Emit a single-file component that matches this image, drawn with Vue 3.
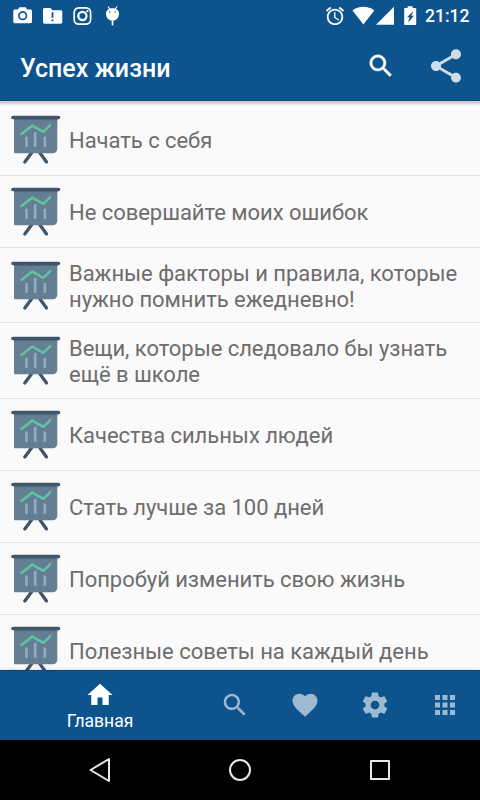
<template>
  <div class="screen">
    <header class="top">
      <div class="status-bar">
        <div class="status-left">
          <!-- camera -->
          <svg width="20" height="18" viewBox="0 0 20 18">
            <path fill="#fff" fill-rule="evenodd" d="M6.5 0.2h6l1.700 2.200h3.200c.9 0 1.600.7 1.600 1.600v10.600c0 .9-.7 1.600-1.600 1.600H1.900c-.9 0-1.600-.7-1.600-1.600V4c0-.9.7-1.600 1.600-1.600h2.900zM9.700 4.100a4.600 4.600 0 1 0 0 9.200 4.600 4.600 0 0 0 0-9.200z" />
            <circle cx="9.700" cy="8.700" r="2.900" fill="#fff" />
          </svg>
          <!-- folder -->
          <svg width="20" height="18" viewBox="0 0 20 18">
            <path fill="#fff" d="M1.700 1.100h5.800l2 2.200h8.200c1 0 1.600.7 1.600 1.600v10.200c0 1-.7 1.600-1.600 1.600h-16C.7 16.700 0 16.100 0 15.100V2.700c0-1 .7-1.600 1.700-1.600z" />
            <path fill="#0d548e" d="M8.600 5.200h1.800v5.600H8.600zM8.600 12.400h1.800v1.800H8.600z" />
          </svg>
          <!-- instagram -->
          <svg width="20" height="18" viewBox="0 0 20 18" fill="none" stroke="#fff">
            <rect x="1.200" y="0.800" width="16.400" height="16.400" rx="4.600" stroke-width="1.700" />
            <circle cx="9.400" cy="9" r="4.100" stroke-width="2.200" />
            <circle cx="14.400" cy="4.200" r="1.100" fill="#fff" stroke="none" />
          </svg>
          <!-- android -->
          <svg width="20" height="20" viewBox="0 0 20 20">
            <path d="M5 0.500l2 3M14 0.500l-2 3" stroke="#fff" stroke-width="1.200" fill="none" />
            <path fill="#fff" d="M3 7.800C3 4.200 5.800 2.200 9.500 2.200S16 4.200 16 7.800c0 4-2.800 7-6.500 7S3 11.800 3 7.800z" />
            <path d="M9.500 14.500v4.800" stroke="#fff" stroke-width="1.700" />
            <circle cx="6.800" cy="6" r="0.700" fill="#0d548e" />
            <circle cx="12.200" cy="6" r="0.700" fill="#0d548e" />
          </svg>
        </div>
        <div class="status-right">
          <svg class="alarm" width="20" height="20" viewBox="1 1 22 22">
            <path fill="#fff" d="M22 5.720l-4.600-3.860-1.290 1.530 4.600 3.860L22 5.720zM7.880 3.390L6.600 1.860 2 5.710l1.290 1.530 4.590-3.850zM12.500 8H11v6l4.750 2.850.75-1.230-4-2.370V8zM12 4c-4.970 0-9 4.030-9 9s4.020 9 9 9c4.970 0 9-4.030 9-9s-4.030-9-9-9zm0 16c-3.870 0-7-3.130-7-7s3.130-7 7-7 7 3.130 7 7-3.130 7-7 7z" />
          </svg>
          <svg width="23" height="19" viewBox="0 0 23 19">
            <path fill="#fff" d="M.5 4.500C3.600 2 7.400.8 11.400.8s7.800 1.200 10.900 3.700L11.400 18.600z" />
          </svg>
          <svg class="signal" width="19" height="19" viewBox="0 0 19 19">
            <path fill="#fff" d="M0 18.800L18 .8v18z" />
          </svg>
          <svg class="battery" width="13" height="20" viewBox="0 0 13 20">
            <path fill="#fff" d="M3.600.3h5v1.800h2.600c.6 0 1 .4 1 1v14.900c0 .6-.4 1-1 1H1.200c-.6 0-1-.4-1-1V3.100c0-.6.4-1 1-1h2.400z" />
            <path fill="#0d548e" d="M9.400 5L3 11.200h2.600L4 16.600l6-6.800H7.400z" />
          </svg>
          <span class="time">21:12</span>
        </div>
      </div>
      <div class="toolbar">
        <h1 class="title">Успех жизни</h1>
        <svg class="tool-search" viewBox="0 0 24 24"><path :d="icons.search" /></svg>
        <svg class="tool-share" viewBox="0 0 24 24"><path :d="icons.share" /></svg>
      </div>
    </header>

    <main class="list">
      <div v-for="item in items" :key="item" class="row">
        <svg class="board" width="50" height="48" viewBox="0 0 50 48">
          <path d="M20.500 37l-6.700 9M29 37l6.500 9" stroke="#40566b" stroke-width="3.300" stroke-linecap="round" />
          <path d="M3 2h43.300v30.800a4.500 4.500 0 0 1-4.500 4.500H4a1 1 0 0 1-1-1z" fill="#647f94" />
          <rect x="3" y="3" width="43.300" height="1.200" fill="#566f84" />
          <rect x="0.200" y="-0.200" width="49" height="3.400" rx="1.600" fill="#40566b" />
          <path d="M15.500 21.800v8M24.200 17.200v12.600M33.800 21.800v8" stroke="#8faac1" stroke-width="2.800" stroke-linecap="round" />
          <path d="M10.500 18L21.300 9.600l11 6.200 7-6.600" fill="none" stroke="#62c2a0" stroke-width="2.500" stroke-linecap="round" stroke-linejoin="round" />
        </svg>
        <span class="label">{{ item }}</span>
      </div>
    </main>

    <nav class="tabs">
      <div v-for="tab in tabs" :key="tab.icon" class="tab" :class="{ active: tab.label }">
        <svg viewBox="0 0 24 24"><path :d="icons[tab.icon]" /></svg>
        <span v-if="tab.label">{{ tab.label }}</span>
      </div>
    </nav>

    <footer class="system-nav">
      <svg viewBox="0 0 30 30"><path d="M24 4v22L5.500 15z" /></svg>
      <svg viewBox="0 0 30 30"><circle cx="15" cy="15" r="10" /></svg>
      <svg viewBox="0 0 30 30"><rect x="6" y="6" width="18" height="18" /></svg>
    </footer>
  </div>
</template>

<script setup>
const items = [
  'Начать с себя',
  'Не совершайте моих ошибок',
  'Важные факторы и правила, которые нужно помнить ежедневно!',
  'Вещи, которые следовало бы узнать ещё в школе',
  'Качества сильных людей',
  'Стать лучше за 100 дней',
  'Попробуй изменить свою жизнь',
  'Полезные советы на каждый день'
]

const tabs = [
  { icon: 'home', label: 'Главная' },
  { icon: 'search' },
  { icon: 'heart' },
  { icon: 'settings' },
  { icon: 'apps' }
]

const icons = {
  home: 'M10 20v-6h4v6h5v-8h3L12 3 2 12h3v8z',
  search: 'M15.5 14h-.79l-.28-.27C15.41 12.59 16 11.11 16 9.5 16 5.91 13.09 3 9.5 3S3 5.91 3 9.5 5.91 16 9.5 16c1.610 0 3.090-.59 4.230-1.570l.27.28v.79l5 4.990L20.490 19l-4.990-5zm-6 0C7.010 14 5 11.990 5 9.500S7.010 5 9.500 5 14 7.010 14 9.500 11.990 14 9.500 14z',
  share: 'M18 16.080c-.76 0-1.440.3-1.960.77L8.910 12.700c.05-.23.09-.46.09-.7s-.04-.47-.09-.7l7.050-4.110c.54.5 1.250.81 2.040.81 1.660 0 3-1.340 3-3s-1.340-3-3-3-3 1.340-3 3c0 .24.04.47.09.7L8.040 9.810C7.500 9.310 6.790 9 6 9c-1.660 0-3 1.340-3 3s1.340 3 3 3c.79 0 1.500-.31 2.040-.81l7.120 4.160c-.05.21-.08.43-.08.65 0 1.610 1.310 2.920 2.920 2.920s2.920-1.310 2.920-2.920-1.310-2.920-2.920-2.920z',
  heart: 'M12 21.350l-1.450-1.320C5.400 15.360 2 12.280 2 8.500 2 5.420 4.420 3 7.500 3c1.740 0 3.410.81 4.500 2.090C13.090 3.810 14.760 3 16.500 3 19.580 3 22 5.420 22 8.500c0 3.780-3.400 6.860-8.550 11.540L12 21.350z',
  settings: 'M19.430 12.980c.04-.32.07-.64.07-.98s-.03-.66-.07-.98l2.110-1.650c.19-.15.24-.42.12-.64l-2-3.460c-.12-.22-.39-.3-.61-.22l-2.490 1c-.52-.4-1.080-.73-1.690-.98l-.38-2.650C14.460 2.180 14.250 2 14 2h-4c-.25 0-.46.18-.49.42l-.38 2.650c-.61.25-1.170.59-1.690.98l-2.490-1c-.23-.09-.49 0-.61.22l-2 3.460c-.13.22-.07.49.12.64l2.110 1.650c-.04.32-.07.65-.07.98s.03.66.07.98l-2.110 1.650c-.19.15-.24.42-.12.64l2 3.460c.12.22.39.3.61.22l2.490-1c.52.4 1.080.73 1.690.98l.38 2.650c.03.24.24.42.49.42h4c.25 0 .46-.18.49-.42l.38-2.650c.61-.25 1.170-.59 1.690-.98l2.490 1c.23.09.49 0 .61-.22l2-3.460c.12-.22.07-.49-.12-.64l-2.110-1.650zM12 15.500c-1.930 0-3.500-1.570-3.500-3.500s1.570-3.500 3.500-3.500 3.500 1.570 3.500 3.500-1.570 3.500-3.500 3.500z',
  apps: 'M4 8h4V4H4v4zm6 12h4v-4h-4v4zm-6 0h4v-4H4v4zm0-6h4v-4H4v4zm6 0h4v-4h-4v4zm6-10v4h4V4h-4zm-6 4h4V4h-4v4zm6 6h4v-4h-4v4zm0 6h4v-4h-4v4z'
}
</script>

<style scoped>
.screen {
  display: flex;
  flex-direction: column;
  width: 480px;
  height: 800px;
  overflow: hidden;
  background: #fafafa;
  font-family: Roboto, 'Noto Sans', sans-serif;
}

svg {
  display: block;
  flex: none;
  overflow: visible;
}

.top {
  flex: none;
  height: 101px;
  box-sizing: border-box;
  background: #0d548e;
  border-bottom: 1px solid #044589;
  box-shadow: 0 2px 2px 1px rgba(60, 40, 50, 0.24);
  z-index: 1;
}

.status-bar {
  display: flex;
  justify-content: space-between;
  height: 31px;
}

.status-left {
  display: flex;
  gap: 10px;
  padding: 7px 0 0 13px;
}

.status-left svg:last-child {
  margin-top: -1px;
}

.status-right {
  display: flex;
  padding: 6px 10px 0 0;
}

.alarm {
  margin-right: 7px;
}

.signal {
  margin: 0 9px 0 1px;
}

.battery {
  margin-right: 8px;
}

.time {
  width: 45px;
  font-size: 17.5px;
  font-weight: 500;
  line-height: 21px;
  color: #fff;
  white-space: nowrap;
}

.toolbar {
  display: flex;
  align-items: center;
  height: 70px;
  padding-left: 20px;
}

.title {
  flex: 1;
  margin: 5px 0 0;
  font-size: 25px;
  font-weight: 500;
  line-height: 30px;
  color: #fff;
}

.tool-search {
  width: 30px;
  height: 30px;
  margin-right: 30px;
  fill: #fff;
  stroke: #fff;
  stroke-width: 0.3;
}

.tool-share {
  width: 40px;
  height: 40px;
  margin-right: 14px;
  fill: #cfdde8;
}

.list {
  flex: 1;
  min-height: 0;
  padding-top: 3px;
  overflow: hidden;
}

.row {
  display: flex;
  align-items: center;
  min-height: 71.8px;
  box-sizing: border-box;
  padding: 12px 12px 10.8px 11px;
  border-bottom: 1px solid #e3e3e3;
}

.board {
  margin-right: 8px;
}

.label {
  margin: 1px 0 -1px;
  font-size: 22px;
  line-height: 26px;
  letter-spacing: -0.04px;
  color: #6d6d6d;
}

.tabs {
  display: flex;
  flex: none;
  height: 70px;
  box-sizing: border-box;
  background: #0d548e;
  border-top: 1px solid #044589;
  box-shadow: 0 -1px 2px rgba(0, 0, 0, 0.12);
  z-index: 1;
}

.tab {
  display: flex;
  flex-direction: column;
  align-items: center;
  width: 70px;
  padding-top: 19px;
}

.tab svg {
  width: 30px;
  height: 30px;
  fill: #9ebad2;
}

.tab.active {
  width: 200px;
  padding-top: 9px;
}

.tab.active svg {
  fill: #fff;
}

.tab span {
  font-size: 17.5px;
  line-height: 22px;
  color: #fff;
}

.system-nav {
  display: flex;
  flex: none;
  align-items: center;
  justify-content: center;
  gap: 110px;
  height: 60px;
  background: #000;
}

.system-nav svg {
  width: 30px;
  height: 30px;
  fill: none;
  stroke: #e8e8e8;
  stroke-width: 2;
  stroke-linejoin: round;
}
</style>

<style>
body {
  margin: 0;
}
</style>
